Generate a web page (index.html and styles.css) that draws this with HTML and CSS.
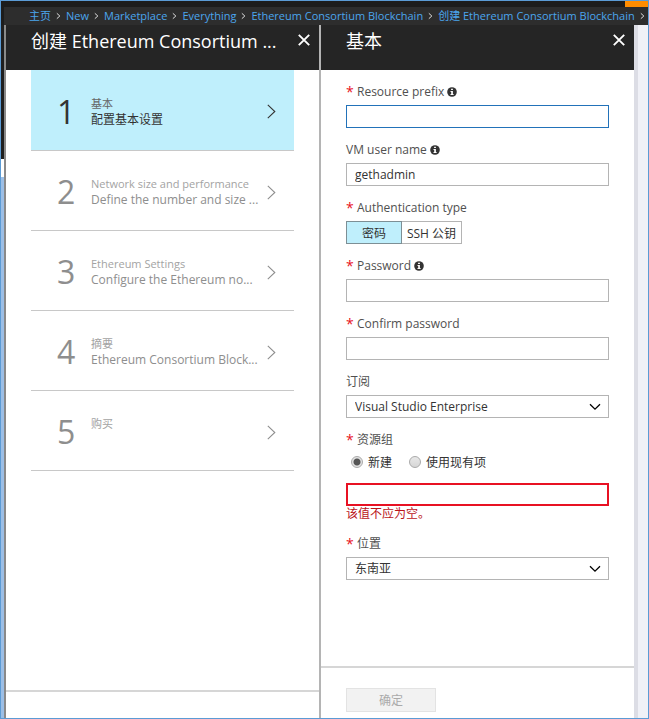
FILE: index.html
```html
<!DOCTYPE html>
<html lang="zh-CN">
<head>
<meta charset="utf-8">
<meta name="viewport" content="width=device-width, initial-scale=1">
<title>创建 Ethereum Consortium Blockchain</title>
<link rel="stylesheet" href="styles.css">
</head>
<body>
<svg class="defs" aria-hidden="true">
  <symbol id="sep" viewBox="0 0 6 8"><path d="M1 .8 4.6 4 1 7.2" fill="none" stroke="currentColor" stroke-width="1.2"/></symbol>
  <symbol id="close" viewBox="0 0 12 12"><path d="M.8.8 11.2 11.2M11.2.8.8 11.2" fill="none" stroke="currentColor" stroke-width="1.9"/></symbol>
  <symbol id="next" viewBox="0 0 9 15"><path d="M.8.8 7.8 7.5.8 14.2" fill="none" stroke="currentColor" stroke-width="1.1"/></symbol>
  <symbol id="down" viewBox="0 0 12 8"><path d="M1 1.2 6 6.2 11 1.2" fill="none" stroke="currentColor" stroke-width="1.3"/></symbol>
  <symbol id="info" viewBox="0 0 10 10"><circle cx="5" cy="5" r="4.8" fill="#333"/><path d="M4.1 1.7h1.8v1.4H4.1zM3.5 4h2.4v3h.7v1H3.5V7h.7V5h-.7z" fill="#fff"/></symbol>
</svg>
<div class="portal">
  <div class="topbar"><span class="notice"></span></div>
  <nav class="crumbs" aria-label="Breadcrumb">
    <a href="#">主页</a><svg><use href="#sep"/></svg>
    <a href="#">New</a><svg><use href="#sep"/></svg>
    <a href="#">Marketplace</a><svg><use href="#sep"/></svg>
    <a href="#">Everything</a><svg><use href="#sep"/></svg>
    <a href="#">Ethereum Consortium Blockchain</a><svg><use href="#sep"/></svg>
    <a href="#">创建 Ethereum Consortium Blockchain</a><svg><use href="#sep"/></svg>
  </nav>
  <main class="journey">
    <div class="rail"></div>
    <section class="blade">
      <header class="blade-head">
        <h1>创建 Ethereum Consortium ...</h1>
        <button class="close" type="button" aria-label="关闭"><svg><use href="#close"/></svg></button>
      </header>
      <div class="steps">
        <a class="step active" href="#"><span class="num">1</span><span class="text"><span class="name">基本</span><span class="desc">配置基本设置</span></span><svg><use href="#next"/></svg></a>
        <a class="step" href="#"><span class="num">2</span><span class="text"><span class="name">Network size and performance</span><span class="desc">Define the number and size ...</span></span><svg><use href="#next"/></svg></a>
        <a class="step" href="#"><span class="num">3</span><span class="text"><span class="name">Ethereum Settings</span><span class="desc">Configure the Ethereum no...</span></span><svg><use href="#next"/></svg></a>
        <a class="step" href="#"><span class="num">4</span><span class="text"><span class="name">摘要</span><span class="desc">Ethereum Consortium Block...</span></span><svg><use href="#next"/></svg></a>
        <a class="step" href="#"><span class="num">5</span><span class="text"><span class="name">购买</span><span class="desc"></span></span><svg><use href="#next"/></svg></a>
      </div>
      <footer class="blade-foot short"></footer>
    </section>
    <form class="blade second">
      <header class="blade-head">
        <h2>基本</h2>
        <button class="close" type="button" aria-label="关闭"><svg><use href="#close"/></svg></button>
      </header>
      <div class="fields">
        <div class="field">
          <label class="label required" for="prefix">Resource prefix<svg><use href="#info"/></svg></label>
          <input class="box focused" id="prefix" type="text">
        </div>
        <div class="field">
          <label class="label" for="user">VM user name<svg><use href="#info"/></svg></label>
          <input class="box" id="user" type="text" value="gethadmin">
        </div>
        <div class="field">
          <div class="label required" id="auth">Authentication type</div>
          <div class="toggle" role="group" aria-labelledby="auth">
            <button class="on" type="button" aria-pressed="true">密码</button><button type="button" aria-pressed="false">SSH 公钥</button>
          </div>
        </div>
        <div class="field">
          <label class="label required" for="pass">Password<svg><use href="#info"/></svg></label>
          <input class="box" id="pass" type="password">
        </div>
        <div class="field">
          <label class="label required" for="confirm">Confirm password</label>
          <input class="box" id="confirm" type="password">
        </div>
        <div class="field">
          <label class="label" for="sub">订阅</label>
          <div class="pick"><select class="box" id="sub"><option>Visual Studio Enterprise</option></select><svg><use href="#down"/></svg></div>
        </div>
        <div class="field">
          <label class="label required" for="group">资源组</label>
          <div class="radios">
            <label><input type="radio" name="mode" checked>新建</label>
            <label><input type="radio" name="mode">使用现有项</label>
          </div>
          <input class="box invalid" id="group" type="text" aria-describedby="group-error">
          <div class="error" id="group-error">该值不应为空。</div>
        </div>
        <div class="field">
          <label class="label required" for="place">位置</label>
          <div class="pick"><select class="box" id="place"><option>东南亚</option></select><svg><use href="#down"/></svg></div>
        </div>
      </div>
      <footer class="blade-foot"><button class="ok" type="button" disabled>确定</button></footer>
    </form>
    <div class="edge"></div>
  </main>
</div>
</body>
</html>
```
FILE: styles.css
```css
* { box-sizing: border-box; }
body, h1, h2 { margin: 0; }
body, button, input, select {
  font-family: "Open Sans", "Noto Sans CJK SC", sans-serif;
  font-size: 12px;
}
.defs { position: absolute; width: 0; height: 0; }
a { text-decoration: none; }
svg { flex: none; display: block; }

.portal {
  min-height: 100vh;
  display: flex;
  flex-direction: column;
  border: 1px solid #5b9bd5;
  background: #fff;
  overflow: hidden;
}
.topbar { height: 6px; background: #1c1c1c; display: flex; justify-content: flex-end; }
.notice { width: 23px; background: #ff8c00; }
.crumbs {
  height: 18px;
  padding-left: 25px;
  display: flex;
  align-items: center;
  gap: 5px;
  background: #2d2d2d;
  border-left: 3px solid #1c1c1c;
  overflow: hidden;
  white-space: nowrap;
  font-size: 11px;
  line-height: 18px;
  color: #ddd;
}
.crumbs a { color: #4ba6ee; }
.crumbs svg { width: 5px; height: 8px; }

.journey { flex: 1; display: flex; }
.rail {
  width: 5px;
  border-right: 2px solid #8a8a8a;
  background: linear-gradient(#1f1f1f 134px, #fff 134px, #fff 152px, #9dbfe6 152px);
}
.blade { flex: 1; min-width: 0; display: flex; flex-direction: column; }
.second { border-left: 2px solid #b4b4b4; }
.blade-head {
  height: 45px;
  padding: 0 9px 0 25px;
  display: flex;
  align-items: flex-start;
  justify-content: space-between;
  gap: 16px;
  background: #252525;
  color: #fff;
}
.blade-head h1, .blade-head h2 {
  min-width: 0;
  white-space: nowrap;
  font-size: 18px;
  line-height: 32px;
  font-weight: 400;
}
.close { border: 0; padding: 0; height: 30px; background: none; color: #fff; }
.close svg { width: 12px; height: 12px; }

.steps { flex: 1; padding: 0 25px; }
.step {
  height: 80px;
  padding: 3px 18px 0 26px;
  display: flex;
  align-items: center;
  border-bottom: 1px solid #c8c8c8;
  color: #8e8e8e;
}
.steps .step:first-child { height: 81px; }
.num { width: 34px; font-size: 32px; line-height: 40px; }
.text { flex: 1; min-width: 0; }
.name, .desc {
  display: block;
  height: 16px;
  line-height: 16px;
  white-space: nowrap;
}
.name { font-size: 11px; color: #a3a3a3; }
.step svg { width: 9px; height: 15px; }
.steps .active { background: #bfeffc; color: #333; }
.active .name { color: #666; }

.blade-foot { height: 52px; padding: 20px 25px 0; border-top: 2px solid #d6d6d6; }
.short { height: 28px; }
.ok {
  width: 90px;
  height: 24px;
  padding: 0;
  border: 1px solid #e3e3e3;
  background: #f2f2f2;
  color: #aaa;
}

.fields { flex: 1; padding: 13px 25px; display: flex; flex-direction: column; gap: 13px; }
.label {
  display: flex;
  align-items: center;
  height: 18px;
  margin-bottom: 4px;
  line-height: 18px;
  color: #505050;
}
.label svg { width: 10px; height: 10px; margin-left: 3px; }
.required::before { content: "*"; width: 11px; font-size: 14px; color: #e81123; }
.box {
  display: block;
  width: 100%;
  height: 23px;
  margin: 0;
  padding: 0 8px;
  border: 1px solid #b4b4b4;
  border-radius: 0;
  outline: 0;
  background: #fff;
  color: #333;
  appearance: none;
}
.focused { border-color: #2272b9; }
.invalid { border: 2px solid #e81123; }
.pick { display: grid; align-items: center; }
.pick > * { grid-area: 1 / 1; }
.pick svg { width: 12px; height: 8px; justify-self: end; margin-right: 8px; pointer-events: none; }
.toggle { display: flex; height: 23px; }
.toggle button {
  width: 60px;
  padding: 0;
  border: 1px solid #b4b4b4;
  border-left: 0;
  background: #fff;
  color: #333;
}
.toggle .on { width: 56px; border: 1px solid #7d8f95; background: #bfeffc; }
.radios { display: flex; gap: 17px; padding-left: 5px; margin-bottom: 12px; color: #333; }
.radios label { display: flex; align-items: center; gap: 5px; height: 18px; }
.radios input {
  appearance: none;
  width: 12px;
  height: 12px;
  margin: 0;
  border: 1px solid #aaa;
  border-radius: 50%;
  background: linear-gradient(#e8e8e8, #d6d6d6);
}
.radios input:checked { background: radial-gradient(circle, #555 3px, #e2e2e2 4px); }
.error { height: 16px; line-height: 16px; color: #ba141a; }
.edge { width: 14px; border-left: 4px solid #dcdde5; background: #f0f1f7; }
```
